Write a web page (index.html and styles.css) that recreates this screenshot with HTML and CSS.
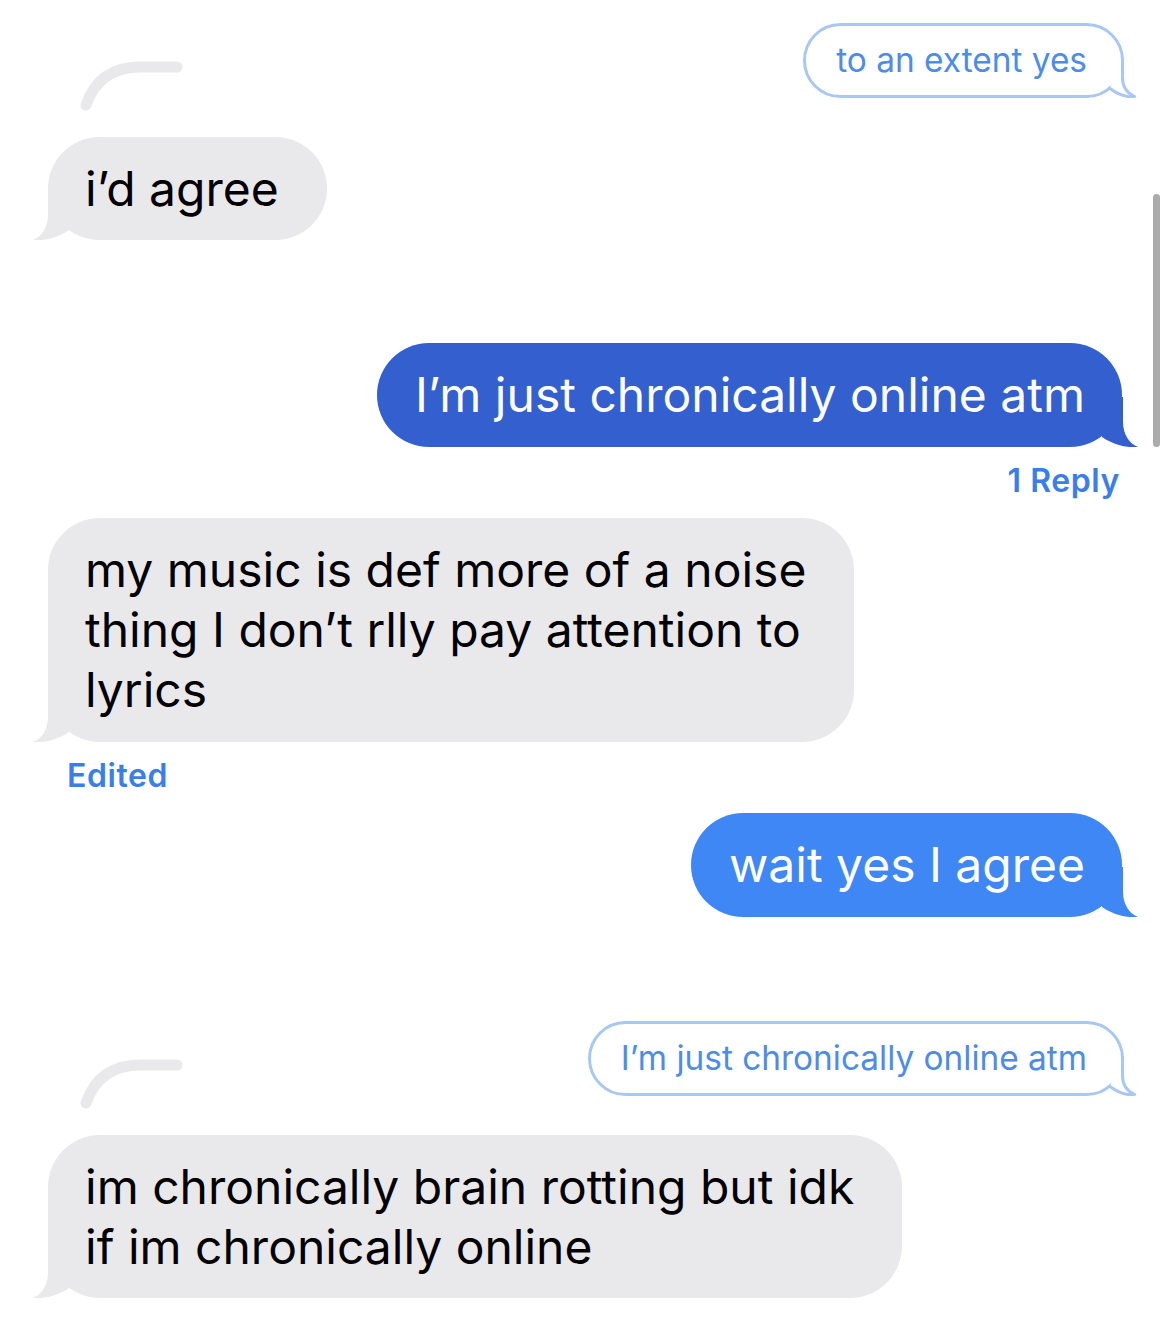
FILE: index.html
```html
<!DOCTYPE html>
<html>
<head>
<meta charset="utf-8">
<link rel="stylesheet" href="styles.css">
</head>
<body>
<div class="chat">
  <div class="thread-head">
    <svg class="thread-curve" width="106" height="52" viewBox="0 0 106 52"><path d="M8,45 C16,22 32,7 62,7 L99,7" /></svg>
    <div class="quote">to an extent yes<svg class="qtail" width="36" height="40" viewBox="0 0 36 40"><path class="qfill" d="M21,0 L21,20 C21,29 26,35 33,37.5 C27,38 18,35 10,30 Z"/><path class="qstroke" d="M22.5,0 L22.5,20 C22.5,29 27,35 34.5,38.5 C27,39.5 18,36.5 10,30.5"/></svg></div>
  </div>

  <div class="row left gap-a">
    <div class="bubble gray">i’d agree<svg class="ltail" width="40" height="50" viewBox="0 0 40 50"><path d="M15,0 L15,25 C15,38 8,47 0,50 C12,51 24,48 36,40 L40,0 Z"/></svg></div>
  </div>

  <div class="row right gap-b">
    <div class="bubble blue dark">I’m just chronically online atm<svg class="rtail" width="40" height="50" viewBox="0 0 40 50"><path d="M25,0 L25,25 C25,38 32,47 40,50 C28,51 16,48 4,40 L0,0 Z"/></svg></div>
  </div>
  <div class="meta right-meta">1 Reply</div>

  <div class="row left">
    <div class="bubble gray tall">my music is def more of a noise<br>thing I don’t rlly pay attention to<br>lyrics<svg class="ltail" width="40" height="50" viewBox="0 0 40 50"><path d="M15,0 L15,25 C15,38 8,47 0,50 C12,51 24,48 36,40 L40,0 Z"/></svg></div>
  </div>
  <div class="meta left-meta">Edited</div>

  <div class="row right">
    <div class="bubble blue light">wait yes I agree<svg class="rtail" width="40" height="50" viewBox="0 0 40 50"><path d="M25,0 L25,25 C25,38 32,47 40,50 C28,51 16,48 4,40 L0,0 Z"/></svg></div>
  </div>

  <div class="thread-head gap-c">
    <svg class="thread-curve" width="106" height="52" viewBox="0 0 106 52"><path d="M8,45 C16,22 32,7 62,7 L99,7" /></svg>
    <div class="quote">I’m just chronically online atm<svg class="qtail" width="36" height="40" viewBox="0 0 36 40"><path class="qfill" d="M21,0 L21,20 C21,29 26,35 33,37.5 C27,38 18,35 10,30 Z"/><path class="qstroke" d="M22.5,0 L22.5,20 C22.5,29 27,35 34.5,38.5 C27,39.5 18,36.5 10,30.5"/></svg></div>
  </div>

  <div class="row left gap-a">
    <div class="bubble gray">im chronically brain rotting but idk<br>if im chronically online<svg class="ltail" width="40" height="50" viewBox="0 0 40 50"><path d="M15,0 L15,25 C15,38 8,47 0,50 C12,51 24,48 36,40 L40,0 Z"/></svg></div>
  </div>
</div>
<div class="scrollbar"></div>
</body>
</html>
```

FILE: styles.css
```css
html, body {
  margin: 0;
  padding: 0;
  background: #ffffff;
}
body {
  font-family: "Inter", "Noto Sans", sans-serif;
  width: 1170px;
  height: 1319px;
  overflow: hidden;
  position: relative;
}
.chat {
  padding-top: 23px;
  display: flex;
  flex-direction: column;
}
.thread-head {
  display: flex;
  align-items: flex-start;
  padding: 0 46px 0 78px;
}
.thread-curve {
  margin-top: 37px;
  flex: none;
}
.thread-curve path {
  fill: none;
  stroke: #e9e9eb;
  stroke-width: 11;
  stroke-linecap: round;
}
.quote {
  margin-left: auto;
  position: relative;
  height: 75px;
  box-sizing: border-box;
  border: 3px solid #a8c8f2;
  border-radius: 38px;
  padding: 0 34px 0 30px;
  line-height: 69px;
  font-size: 33.4px;
  color: #4d8ce9;
  white-space: nowrap;
}
.qtail {
  position: absolute;
  right: -15px;
  bottom: -3px;
}
.qfill { fill: #ffffff; }
.qstroke {
  fill: none;
  stroke: #a8c8f2;
  stroke-width: 3;
  stroke-linecap: round;
  stroke-linejoin: round;
}
.row {
  display: flex;
  padding: 0 48px;
}
.row.left { justify-content: flex-start; }
.row.right { justify-content: flex-end; }
.gap-a { margin-top: 25px; }
.gap-b { margin-top: 103px; }
.gap-c { margin-top: 104px; }
.bubble {
  position: relative;
  font-size: 48px;
  line-height: 60px;
  padding: 22px 37px 22px 38px;
  border-radius: 52px;
  white-space: nowrap;
}
.bubble.gray {
  background: #e9e9eb;
  color: #000;
  padding: 22px 48px 21px 37px;
}
.bubble.gray.tall { padding-bottom: 22px; }
.bubble.blue { color: #fff; }
.bubble.dark { background: #335fcf; }
.bubble.light { background: #3e87f5; }
.ltail {
  position: absolute;
  left: -15px;
  bottom: 0;
  fill: #e9e9eb;
}
.rtail {
  position: absolute;
  right: -16px;
  bottom: 0;
}
.dark .rtail { fill: #335fcf; }
.light .rtail { fill: #3e87f5; }
.meta {
  font-size: 32px;
  font-weight: 600;
  letter-spacing: 0.6px;
  line-height: 36px;
  color: #3a7ee9;
  padding: 16px 0 19px;
}
.right-meta {
  text-align: right;
  padding-right: 50px;
}
.left-meta {
  padding-left: 67px;
}
.scrollbar {
  position: absolute;
  left: 1153px;
  top: 194px;
  width: 7px;
  height: 253px;
  border-radius: 4px;
  background: #ababab;
}
```
